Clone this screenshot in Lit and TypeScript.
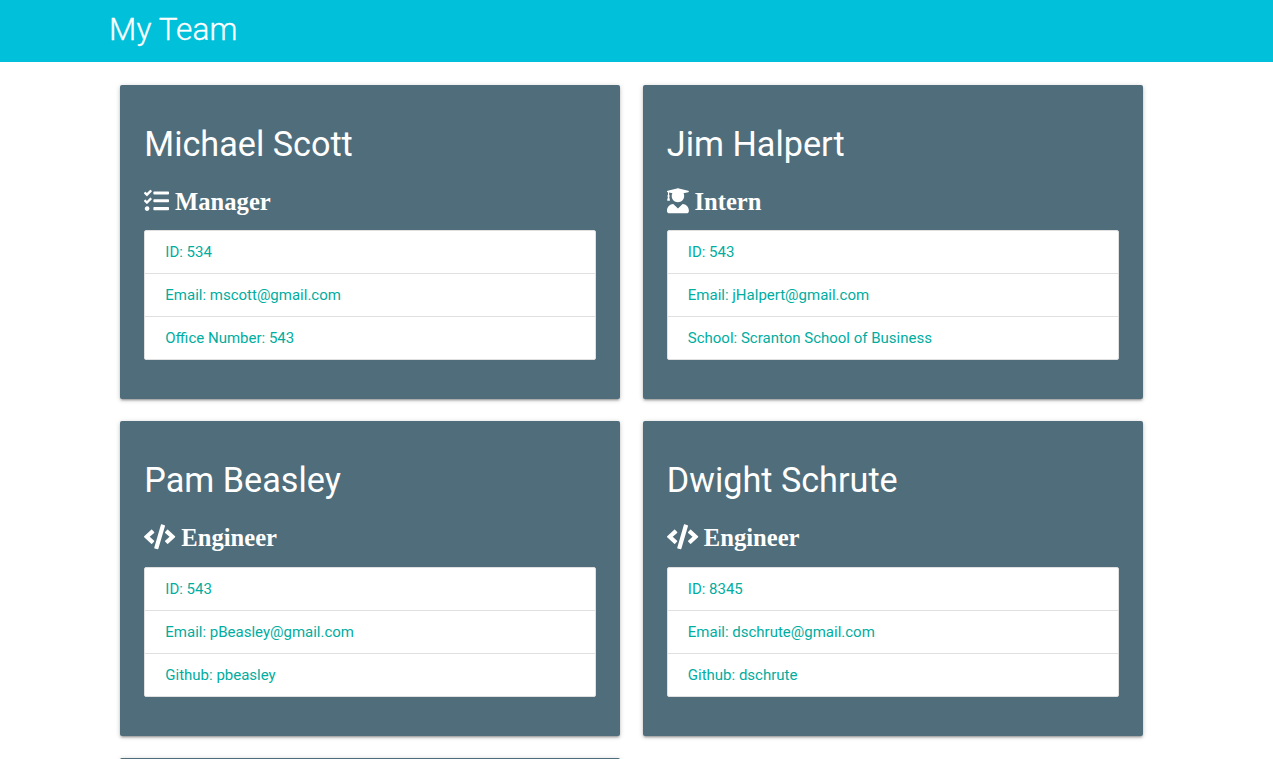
import { LitElement, html, css, svg } from "lit";
import { customElement, property } from "lit/decorators.js";

type Role = "Manager" | "Intern" | "Engineer";

interface Member {
  name: string;
  role: Role;
  details: string[];
}

const ICONS: Record<Role, { width: number; path: string }> = {
  Manager: {
    width: 512,
    path: "M139.61 35.5a12 12 0 0 0-17 0L58.93 98.81l-22.7-22.12a12 12 0 0 0-17 0L3.53 92.41a12 12 0 0 0 0 17l47.59 47.4a12.78 12.78 0 0 0 17.61 0l15.59-15.62L156.52 69a12.09 12.09 0 0 0 .09-17zm0 159.19a12 12 0 0 0-17 0l-63.68 63.72-22.7-22.1a12 12 0 0 0-17 0L3.53 252a12 12 0 0 0 0 17L51 316.5a12.77 12.77 0 0 0 17.6 0l15.7-15.69 72.2-72.22a12 12 0 0 0 .09-16.9zM64 368c-26.49 0-48.59 21.5-48.59 48S37.53 464 64 464a48 48 0 0 0 0-96zm432 16H208a16 16 0 0 0-16 16v32a16 16 0 0 0 16 16h288a16 16 0 0 0 16-16v-32a16 16 0 0 0-16-16zm0-320H208a16 16 0 0 0-16 16v32a16 16 0 0 0 16 16h288a16 16 0 0 0 16-16V80a16 16 0 0 0-16-16zm0 160H208a16 16 0 0 0-16 16v32a16 16 0 0 0 16 16h288a16 16 0 0 0 16-16v-32a16 16 0 0 0-16-16z",
  },
  Intern: {
    width: 448,
    path: "M319.4 320.6L224 416l-95.4-95.4C57.1 323.7 0 382.2 0 454.4v9.6c0 26.5 21.5 48 48 48h352c26.5 0 48-21.5 48-48v-9.6c0-72.2-57.1-130.7-128.6-133.8zM13.6 79.8l6.4 1.5v58.4c-7 4.2-12 11.5-12 20.3 0 8.4 4.6 15.4 11.1 19.7L3.5 242c-1.7 6.9 2.1 14 7.6 14h41.8c5.5 0 9.3-7.1 7.6-14l-15.6-62.3C51.4 175.4 56 168.4 56 160c0-8.8-5-16.1-12-20.3V87.1l66 15.9c-8.6 17.2-14 36.4-14 57 0 70.7 57.3 128 128 128s128-57.3 128-128c0-20.6-5.3-39.8-14-57l96.3-23.2c18.2-4.4 18.2-27.1 0-31.5l-190.4-46c-13-3.1-26.7-3.1-39.7 0L13.6 48.2c-18.1 4.4-18.1 27.2 0 31.6z",
  },
  Engineer: {
    width: 640,
    path: "M278.9 511.5l-61-17.7c-6.4-1.8-10-8.5-8.2-14.9L346.2 8.7c1.8-6.4 8.5-10 14.9-8.2l61 17.7c6.4 1.8 10 8.5 8.2 14.9L293.8 503.3c-1.9 6.4-8.5 10.1-14.9 8.2zm-114-112.2l43.5-46.4c4.6-4.9 4.3-12.7-.8-17.2L117 256l90.6-79.7c5.1-4.5 5.5-12.3.8-17.2l-43.5-46.4c-4.5-4.8-12.1-5.1-17-.5L3.8 247.2c-5.1 4.7-5.1 12.8 0 17.5l144.1 135.1c4.9 4.6 12.5 4.4 17-.5zm327.2.6l144.1-135.1c5.1-4.7 5.1-12.8 0-17.5L492.1 112.1c-4.8-4.5-12.4-4.3-17 .5L431.6 159c-4.6 4.9-4.3 12.7.8 17.2L523 256l-90.6 79.7c-5.1 4.5-5.5 12.3-.8 17.2l43.5 46.4c4.5 4.9 12.1 5.1 17 .6z",
  },
};

const TEAM: Member[] = [
  {
    name: "Michael Scott",
    role: "Manager",
    details: ["ID: 534", "Email: mscott@gmail.com", "Office Number: 543"],
  },
  {
    name: "Jim Halpert",
    role: "Intern",
    details: ["ID: 543", "Email: jHalpert@gmail.com", "School: Scranton School of Business"],
  },
  {
    name: "Pam Beasley",
    role: "Engineer",
    details: ["ID: 543", "Email: pBeasley@gmail.com", "Github: pbeasley"],
  },
  {
    name: "Dwight Schrute",
    role: "Engineer",
    details: ["ID: 8345", "Email: dschrute@gmail.com", "Github: dschrute"],
  },
];

@customElement("member-card")
export class MemberCard extends LitElement {
  @property({ attribute: false }) member?: Member;

  static styles = css`
    :host {
      display: block;
      box-sizing: border-box;
      height: 314.5px;
      padding: 24px;
      border-radius: 2px;
      background: #4f6d7a;
      color: #fff;
      box-shadow: 0 2px 2px 0 rgba(0, 0, 0, 0.14),
        0 3px 1px -2px rgba(0, 0, 0, 0.12), 0 1px 5px 0 rgba(0, 0, 0, 0.2);
    }
    .name {
      margin: 15.9px 0 0;
      font-size: 34.2px;
      font-weight: 400;
      line-height: 38px;
    }
    .role {
      display: flex;
      align-items: center;
      gap: 5.8px;
      height: 25px;
      margin: 26.2px 0 16.4px;
      font-family: "Liberation Serif", serif;
      font-size: 24.6px;
      font-weight: 700;
      line-height: 25px;
    }
    .icon {
      display: block;
      height: 25px;
      margin-bottom: 1.8px;
      overflow: visible;
      fill: currentColor;
    }
    .details {
      margin: 0;
      padding: 0;
      list-style: none;
      border: 1px solid #e0e0e0;
      border-radius: 2px;
      background: #fff;
    }
    .detail {
      padding: 10px 20px;
      color: #00ad9f;
      font-size: 15px;
      line-height: 22px;
    }
    .detail + .detail {
      border-top: 1px solid #e0e0e0;
    }
  `;

  render() {
    const m = this.member;
    if (!m) return html``;
    const icon = ICONS[m.role];
    return html`
      <h2 class="name">${m.name}</h2>
      <div class="role">
        <svg class="icon" viewBox="0 -6 ${icon.width} 512" aria-hidden="true">
          ${svg`<path d=${icon.path}></path>`}
        </svg>
        <span>${m.role}</span>
      </div>
      <ul class="details">
        ${m.details.map((d) => html`<li class="detail">${d}</li>`)}
      </ul>
    `;
  }
}

@customElement("app-root")
export class AppRoot extends LitElement {
  static styles = css`
    :host {
      display: block;
      height: 759px;
      overflow: hidden;
      background: #fff;
      font-family: Roboto, sans-serif;
    }
    .header {
      display: flex;
      align-items: center;
      box-sizing: border-box;
      height: 62px;
      padding: 0 0 3px 109.1px;
      background: #00c0da;
      color: #fff;
    }
    .title {
      margin: 0;
      font-size: 31.5px;
      font-weight: 300;
      letter-spacing: 0.1px;
      line-height: 40px;
      -webkit-text-stroke: 0.35px #fff;
    }
    .team {
      display: grid;
      grid-template-columns: 500px 500px;
      gap: 22px 22.5px;
      padding: 22.7px 0 0 120.3px;
    }
  `;

  render() {
    return html`
      <header class="header"><h1 class="title">My Team</h1></header>
      <main class="team">
        ${TEAM.map((m) => html`<member-card .member=${m}></member-card>`)}
        <member-card></member-card>
      </main>
    `;
  }
}
